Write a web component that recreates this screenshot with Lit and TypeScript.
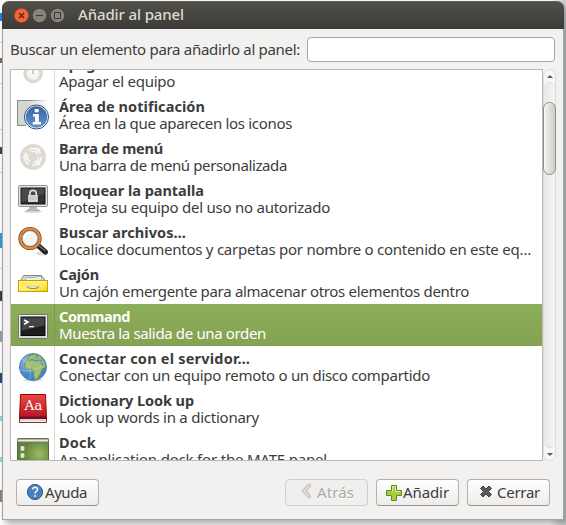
import { LitElement, html, svg, css } from "lit";
import { customElement, property } from "lit/decorators.js";

/** Text run whose tracking is adjusted so that it spans a given width. */
@customElement("fit-text")
class FitText extends LitElement {
  @property({ type: Number }) span = 0;
  @property() text = "";
  static styles = css`
    :host { display: block; white-space: pre; }
    span { display: inline-block; }
  `;
  render() { return html`<span>${this.text}</span>`; }
  updated() {
    const el = this.renderRoot.querySelector("span") as HTMLElement;
    el.style.letterSpacing = "0px";
    const natural = el.getBoundingClientRect().width;
    el.style.letterSpacing = `${(this.span - natural) / this.text.length}px`;
  }
}

const icons: Record<string, unknown> = {
  power: svg`<circle cx="16" cy="16.500" r="7.700" fill="#f6f5f3" stroke="#dedbd5" stroke-width="3"/><circle cx="16" cy="16.500" r="9.300" fill="none" stroke="#c9c6bf" stroke-width=".6"/><path d="M16 7v9" stroke="#fff" stroke-width="6"/><path d="M16 8v9" stroke="#cfcbc3" stroke-width="2"/>`,
  info: svg`<g transform="translate(0 1)"><path d="M1 1H31V25H1z" fill="url(#tray)"/><path d="M.5 25.500V.5" stroke="#888a85"/><path d="M0 0H31V1H0z" fill="url(#edge)"/><path d="M.5 25.500H9" stroke="#888a85"/><circle cx="19.500" cy="17" r="12" fill="#fff" stroke="#204a87"/><circle cx="19.500" cy="17" r="10.700" fill="url(#blue)"/><path d="M17.700 9h4v3.200h-4zM16 14h5.800v8H24v2.500h-8.300V22H18v-5.500h-2z" fill="#fff"/></g>`,
  menu: svg`<circle cx="16" cy="16" r="13" fill="#dedad3"/><circle cx="16" cy="16" r="8.300" fill="none" stroke="#fff" stroke-width="1.400" stroke-dasharray="13.400 4"/><circle cx="16" cy="16" r="5.500" fill="none" stroke="#fff" stroke-width="1.100" stroke-dasharray="8.500 3"/><path d="M18 6l6 2-4 4zM24 18l-1 7-5-4zM5 16l6-3v6z" fill="#f7f5f2"/>`,
  lock: svg`<g transform="translate(0 1)"><ellipse cx="16" cy="27.500" rx="9" ry="1.300" fill="#d3d3d0"/><path d="M12.500 23.500h7V25l3 1.500h-13l3-1.500z" fill="#b8bab6" stroke="#999b96" stroke-width=".6"/><rect x="1.500" y="1.500" width="29" height="21" rx="1.500" fill="#e6e6e3" stroke="#93958f"/><rect x="4" y="4" width="24" height="16" fill="#303130" stroke="#111"/><path d="M4.500 4.500h23v5l-23 9z" fill="#494a48"/><path d="M12.800 11V9.500a3.200 3.200 0 0 1 6.400 0V11" fill="none" stroke="#ddd" stroke-width="1.700"/><rect x="11" y="11" width="10" height="7" rx=".8" fill="#d4d4d4"/><path d="M11 13h10M11 15h10" stroke="#bbb" stroke-width=".6"/></g>`,
  search: svg`<g transform="translate(0 1)"><ellipse cx="25" cy="27.500" rx="6" ry="2" fill="#ddd"/><path d="M21.500 20l7 6" stroke="#1f201f" stroke-width="5" stroke-linecap="round"/><path d="M21 19l7.500 6" stroke="#777" stroke-width="1.300"/><circle cx="13" cy="12.500" r="9.600" fill="#f5f5f4" stroke="#7a3d08" stroke-width="4"/><circle cx="13" cy="12.500" r="9.700" fill="none" stroke="#d98a45" stroke-width="2.400"/><circle cx="13" cy="12.500" r="7.800" fill="#f4f4f3" stroke="#8a8a88" stroke-width=".7"/><path d="M7.500 12a6 6 0 0 1 6-5.500" fill="none" stroke="#fff" stroke-width="2"/></g>`,
  drawer: svg`<g transform="translate(0 1)"><path d="M6.500 7.500h18l4 5.500h-25z" fill="#d3d7cf" stroke="#888a85"/><path d="M8.500 12.500v-2l2-1h8l1.500-1h4.500v4z" fill="#eee" stroke="#a3a59f" stroke-width=".8"/><rect x="1.500" y="12.500" width="29" height="11" fill="url(#yellow)" stroke="#c4a000"/><path d="M2.500 22V13.500h27" fill="none" stroke="#fff7a0"/><path d="M11 17.500c.5 3 9.500 3 10 0" fill="none" stroke="#96876a" stroke-width="2.600"/><path d="M11 17c.5 3 9.500 3 10 0" fill="none" stroke="#f5f5ee" stroke-width="1.500"/></g>`,
  terminal: svg`<g transform="translate(0 1)"><rect x="1.500" y="4.500" width="29" height="24" rx=".8" fill="#eeeeec" stroke="#73766f"/><rect x="4" y="7" width="24" height="18.500" fill="#1c1e1e" stroke="#080808"/><path d="M4.500 7.500h23v8l-23 5z" fill="#434645"/><path d="M7 10l4 2-4 2.200" fill="none" stroke="#fff" stroke-width="1.600"/><path d="M12 16.700h5" stroke="#fff" stroke-width="1.200"/><path d="M3 27h26" stroke="#babdb6"/></g>`,
  globe: svg`<ellipse cx="16" cy="29" rx="10" ry="1.500" fill="#ddd"/><circle cx="16" cy="16" r="13.500" fill="url(#sea)" stroke="#4d82bf"/><path d="M10 10l2-5 5-2 7 2.500 4 6 .5 5-3 1-2 5-3 5-2.500 1-1.500-4 .5-4-2-2.500-5 .500-2.500-3 .5-4z" fill="#a3c06d" stroke="#6f963e" stroke-width=".8"/><path d="M12.500 9.500l3-1 3 1.500 5-1 1.500 1.500M19 4.500l1 3M24 11l2.500 4" fill="none" stroke="#5b91c8" stroke-width="1.500"/><path d="M5 8q10 3 8 20M3 19q13 3 25-5" fill="none" stroke="#b5d3ef" stroke-width=".5"/>`,
  dict: svg`<path d="M2.500 24.500h27v5h-27z" fill="#f2f2f0" stroke="#853030"/><path d="M3 27h26" stroke="#bbb"/><path d="M3.500 1.500h25l1 24h-27z" fill="url(#red)" stroke="#a40000"/><path d="M2.500 24.500h27" stroke="#710e22" stroke-width="2"/><text x="16.500" y="17" text-anchor="middle" font-family="DejaVu Serif,serif" font-size="13.500" textLength="18" lengthAdjust="spacingAndGlyphs" fill="#fff">Aa</text>`,
  dock: svg`<g transform="translate(0 3)"><rect x=".5" y=".5" width="31" height="31" rx="1" fill="url(#green)" stroke="#536e35"/><path d="M.5 1h31v3h-31z" fill="#eceadd" stroke="#777961"/><path d="M4 8.500h3v4H4zM4 15.500h3v4H4z" fill="#eeeee2" stroke="#cdd2b9"/></g>`,
};

// title, title width, description, description width, icon
const items: [string, number, string, number, string][] = [
  ["Apagar…", 61, "Apagar el equipo", 116, "power"],
  ["Área de notificación", 146, "Área en la que aparecen los iconos", 233, "info"],
  ["Barra de menú", 104, "Una barra de menú personalizada", 228, "menu"],
  ["Bloquear la pantalla", 145, "Proteja su equipo del uso no autorizado", 271, "lock"],
  ["Buscar archivos…", 127, "Localice documentos y carpetas por nombre o contenido en este eq…", 472, "search"],
  ["Cajón", 40, "Un cajón emergente para almacenar otros elementos dentro", 410, "drawer"],
  ["Command", 71, "Muestra la salida de una orden", 207, "terminal"],
  ["Conectar con el servidor…", 191, "Conectar con un equipo remoto o un disco compartido", 371, "globe"],
  ["Dictionary Look up", 135, "Look up words in a dictionary", 200, "dict"],
  ["Dock", 37, "An application dock for the MATE panel", 268, "dock"],
];

// Slivers of the page behind the window: top, height, colour
const slivers: [number, number, string][] = [
  [13, 8, "#1a82f0"], [42, 1, "#bcdcf8"], [58, 5, "#666f78"], [83, 1, "#bcdcf8"], [129, 1, "#cfd3da"],
  [147, 7, "#3b4850"], [172, 1, "#cfd3da"], [233, 15, "#2b9fe6"], [268, 1, "#d8d8dc"], [291, 10, "#3b4048"],
  [331, 11, "#9a9bb8"], [373, 10, "#1c4f86"], [416, 5, "#8cdcf4"], [457, 5, "#8cdcf4"], [490, 12, "#98807a"],
];

@customElement("app-root")
class AppRoot extends LitElement {
  static styles = css`
    :host { display: block; width: 566px; height: 525px; overflow: hidden; font: 15px/17px "Noto Sans", "Open Sans", sans-serif; color: #3c3c3c; }
    * { box-sizing: border-box; }
    .desktop { position: relative; height: 525px; padding: 1px 2px 5px; background: linear-gradient(90deg, #fff 0 550px, #cfd2d4 564px); }
    .sliver { position: absolute; left: 0; width: 2px; }
    .window { position: relative; height: 519px; width: 562px; border-radius: 7px 7px 0 0; background: #f2f1f0; border: 1px solid #a8a29d; border-top: 0; box-shadow: 3px 4px 7px #0005; display: flex; flex-direction: column; }
    .bar { height: 28px; flex: none; margin: 0 -1px; border-radius: 7px 7px 0 0; background: linear-gradient(#504f48, #3c3b37); border-top: 1px solid #5f5e57; color: #dfdbd2; display: flex; align-items: center; padding-left: 12px; gap: 3px; }
    .bar svg { width: 15px; height: 15px; }
    .bar fit-text { margin: -2px 0 0 10px; font-weight: 500; }
    .search { height: 25px; margin: 8px 8px 7px 7px; display: flex; align-items: center; }
    .field { width: 248px; height: 25px; margin-left: auto; background: #fff; border: 1px solid #aaa59f; border-radius: 4px; }
    .body { display: flex; height: 392px; margin-left: 7px; }
    .list { width: 533px; height: 392px; border: 1px solid #bcb8b3; background: #fff; overflow: hidden; }
    .rows { margin-top: -18px; }
    .row { height: 42px; display: flex; }
    .cell { width: 44px; height: 42px; flex: none; border-right: 1px solid #dcdad8; padding: 5px 0 0 6px; }
    .cell svg { width: 32px; height: 32px; display: block; overflow: visible; }
    .copy { padding: 4px 0 0 4px; }
    .title { font-weight: 700; font-size: 14.5px; }
    .sel { background: linear-gradient(#8dae59, #83a253); color: #fff; }
    .sel .cell { border-color: #7c994e; }
    .scroll { width: 13px; height: 392px; border: 1px solid #dedcda; border-radius: 7px; background: #f8f7f6; display: flex; flex-direction: column; align-items: center; }
    .arrow { width: 6px; height: 12px; flex: none; display: flex; align-items: center; }
    .arrow svg { width: 6px; height: 3px; }
    .trough { width: 11px; flex: 1; border-radius: 6px; border: solid #dedcda; border-width: 1px 0; background: linear-gradient(90deg, #eae9e7, #f5f4f3); padding-top: 19px; }
    .thumb { width: 13px; height: 73px; margin-left: -1px; border: 1px solid #8f8b85; border-radius: 7px; background: linear-gradient(90deg, #f3f2f1, #cfccc8); box-shadow: inset 1px 1px #fff8; }
    .actions { display: flex; margin: 18px 13px 0 13px; gap: 8px; }
    .btn { height: 27px; width: 83px; border: 1px solid #b5b0ab; border-bottom-color: #99948f; border-radius: 4px; background: linear-gradient(#fff, #edecea); display: flex; align-items: center; padding-left: 9px; }
    .btn svg { width: 18px; height: 18px; flex: none; }
    .help { margin-right: auto; }
    .help svg { margin: -1px 1px 0 0; }
    .add { padding-left: 8px; }
    .off { background: #f0efed; border-color: #d2cfcc; color: #aaa7a4; text-shadow: 0 1px #fff; padding-left: 12px; }
    .off svg { margin: -3px 1px 0 0; }
    .close { padding-left: 9px; }
    .close svg { margin: -1px 2px 0 0; }
  `;
  render() {
    return html`<div class="desktop">
      ${slivers.map(([y, h, c]) => html`<div class="sliver" style="top:${y}px;height:${h}px;background:${c}"></div>`)}
      <div class="window">
      <div class="bar">
        <svg viewBox="0 0 15 15"><circle cx="7.500" cy="7.500" r="7.200" fill="#f0653a" stroke="#a33a18" stroke-width=".6"/><path d="M5 5l5 5M10 5l-5 5" stroke="#4c2418" stroke-width="1.300"/></svg>
        <svg viewBox="0 0 15 15"><circle cx="7.500" cy="7.500" r="7.200" fill="#86847b" stroke="#33322e" stroke-width=".6"/><path d="M4 7.500h7" stroke="#3c3b37"/></svg>
        <svg viewBox="0 0 15 15"><circle cx="7.500" cy="7.500" r="7.200" fill="#86847b" stroke="#33322e" stroke-width=".6"/><path d="M4.500 4.500h6v6h-6z" fill="none" stroke="#3c3b37"/></svg>
        <fit-text text="Añadir al panel" .span=${106}></fit-text>
      </div>
      <div class="search"><fit-text text="Buscar un elemento para añadirlo al panel:" .span=${290}></fit-text><div class="field"></div></div>
      <div class="body">
        <div class="list"><div class="rows">${items.map(([t, tw, d, dw, i]) => html`
          <div class="row ${i === "terminal" ? "sel" : ""}">
            <div class="cell"><svg viewBox="0 0 32 32"><defs>
              <linearGradient id="edge"><stop offset=".4" stop-color="#888a85"/><stop offset="1" stop-color="#fff"/></linearGradient>
              <linearGradient id="tray"><stop offset=".3" stop-color="#d3d7cf"/><stop offset="1" stop-color="#fff"/></linearGradient>
              <linearGradient id="blue" x2="0" y2="1"><stop stop-color="#3465a4"/><stop offset="1" stop-color="#6594cb"/></linearGradient>
              <linearGradient id="yellow" x2="1" y2="1"><stop stop-color="#fce94f"/><stop offset=".55" stop-color="#fff06a"/><stop offset="1" stop-color="#edd400"/></linearGradient>
              <radialGradient id="sea" cx=".35" cy=".3"><stop stop-color="#a5caee"/><stop offset="1" stop-color="#4584c8"/></radialGradient>
              <linearGradient id="red" x2="0" y2="1"><stop stop-color="#e74a42"/><stop offset="1" stop-color="#b41426"/></linearGradient>
              <radialGradient id="green" cx=".7" cy=".5"><stop stop-color="#9dbc67"/><stop offset="1" stop-color="#60823b"/></radialGradient>
            </defs>${icons[i]}</svg></div>
            <div class="copy"><fit-text class="title" .text=${t} .span=${tw}></fit-text><fit-text .text=${d} .span=${dw}></fit-text></div>
          </div>`)}</div></div>
        <div class="scroll">
          <div class="arrow"><svg viewBox="0 0 6 3"><path d="M0 3l3-3 3 3z" fill="#5c5a57"/></svg></div>
          <div class="trough"><div class="thumb"></div></div>
          <div class="arrow"><svg viewBox="0 0 6 3"><path d="M0 0l3 3 3-3z" fill="#5c5a57"/></svg></div>
        </div>
      </div>
      <div class="actions">
        <div class="btn help"><svg viewBox="0 0 18 18"><circle cx="9" cy="9" r="7.600" fill="#4681b9" stroke="#275c91"/><path d="M6.500 6.500q.3-2.300 2.700-2.300 2.300.1 2.300 2.100 0 1.200-1.300 2-1.200.8-1.200 2.200" fill="none" stroke="#fff" stroke-width="1.500"/><circle cx="9" cy="13" r="1" fill="#fff"/></svg><fit-text text="Ayuda" .span=${42}></fit-text></div>
        <div class="btn off"><svg viewBox="0 0 18 18"><path d="M10.500 2l2.500 1.500L8.500 9l4.500 5.500-2.500 1.500L4 9z" fill="#dddbd9" stroke="#bbb8b5"/></svg><fit-text text="Atrás" .span=${37}></fit-text></div>
        <div class="btn add"><svg viewBox="0 0 18 18"><path d="M6.500 1.500h5v5h5v5h-5v5h-5v-5h-5v-5h5z" fill="#a5cd3f" stroke="#5c8c1f"/><path d="M7.500 7.500v-5h3v5h5" fill="none" stroke="#d9eda0"/></svg><fit-text text="Añadir" .span=${46}></fit-text></div>
        <div class="btn close"><svg viewBox="0 0 18 18"><path d="M3.500 5.500l2.500-2.500 3 3 3-3 2.500 2.500-3 3 3 3L12 14l-3-3-3 3-2.500-2.500 3-3z" fill="#5b5a58" stroke="#454442"/></svg><fit-text text="Cerrar" .span=${43}></fit-text></div>
      </div>
    </div></div>`;
  }
}
